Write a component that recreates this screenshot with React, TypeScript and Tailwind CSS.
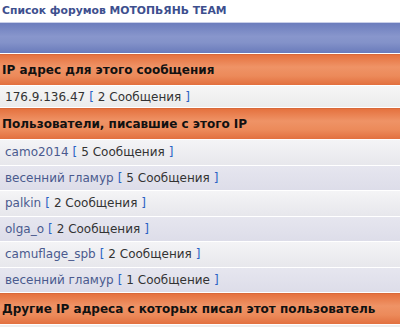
import React from "react";

const users = [
  { name: "camo2014", count: "5 Сообщения" },
  { name: "весенний гламур", count: "5 Сообщения" },
  { name: "palkin", count: "2 Сообщения" },
  { name: "olga_o", count: "2 Сообщения" },
  { name: "camuflage_spb", count: "2 Сообщения" },
  { name: "весенний гламур", count: "1 Сообщение" },
];

const Header = ({ children }: { children: React.ReactNode }) => (
  <div className="h-[31px] flex items-center px-[2px] border-t border-[#d9693a] bg-[linear-gradient(to_bottom,#e5723f,#ef9366_40%,#ec8a5a_70%,#e2703f)] text-[12px] font-bold text-[#111]">
    {children}
  </div>
);

const Row = ({
  name,
  count,
  alt,
}: {
  name: string;
  count: string;
  alt?: boolean;
}) => (
  <div
    className={`h-[24.5px] flex items-center px-[5px] text-[12px] ${
      alt
        ? "bg-[linear-gradient(to_bottom,#e6e6ef,#dddde9)]"
        : "bg-[linear-gradient(to_bottom,#f4f4f6,#e7e7ec)]"
    }`}
  >
    <span className="text-[#4a5a8e]">{name}</span>
    <span className="text-[#2a62c4] ml-[4px]">[</span>
    <span className="text-[#333] mx-[4px]">{count}</span>
    <span className="text-[#2a62c4]">]</span>
  </div>
);

export default function App() {
  return (
    <div className="w-[400px] h-[327px] overflow-hidden bg-white font-['DejaVu_Sans',sans-serif]">
      <div className="h-[22px] flex items-center px-[2px] text-[10.8px] font-bold text-[#3d4f8e]">
        Список форумов МОТОПЬЯНЬ TEAM
      </div>
      <div className="flex flex-col gap-px">
        <div className="h-[31px] border-t border-[#c9cfe8] bg-[linear-gradient(to_bottom,#6c7dbd,#8896cc_45%,#8392c9_65%,#6a7bbb)]" />
        <Header>IP адрес для этого сообщения</Header>
        <div className="h-[21px] flex items-center px-[5px] text-[12px] bg-[linear-gradient(to_bottom,#f6f6f6,#ebebeb)]">
          <span className="text-[#333]">176.9.136.47</span>
          <span className="text-[#2a62c4] ml-[4px]">[</span>
          <span className="text-[#333] mx-[4px]">2 Сообщения</span>
          <span className="text-[#2a62c4]">]</span>
        </div>
        <Header>Пользователи, писавшие с этого IP</Header>
        {users.map((u, i) => (
          <Row key={i} name={u.name} count={u.count} alt={i % 2 === 1} />
        ))}
        <Header>Другие IP адреса с которых писал этот пользователь</Header>
        <div className="h-[10px] bg-[#eeeeee]" />
      </div>
    </div>
  );
}
